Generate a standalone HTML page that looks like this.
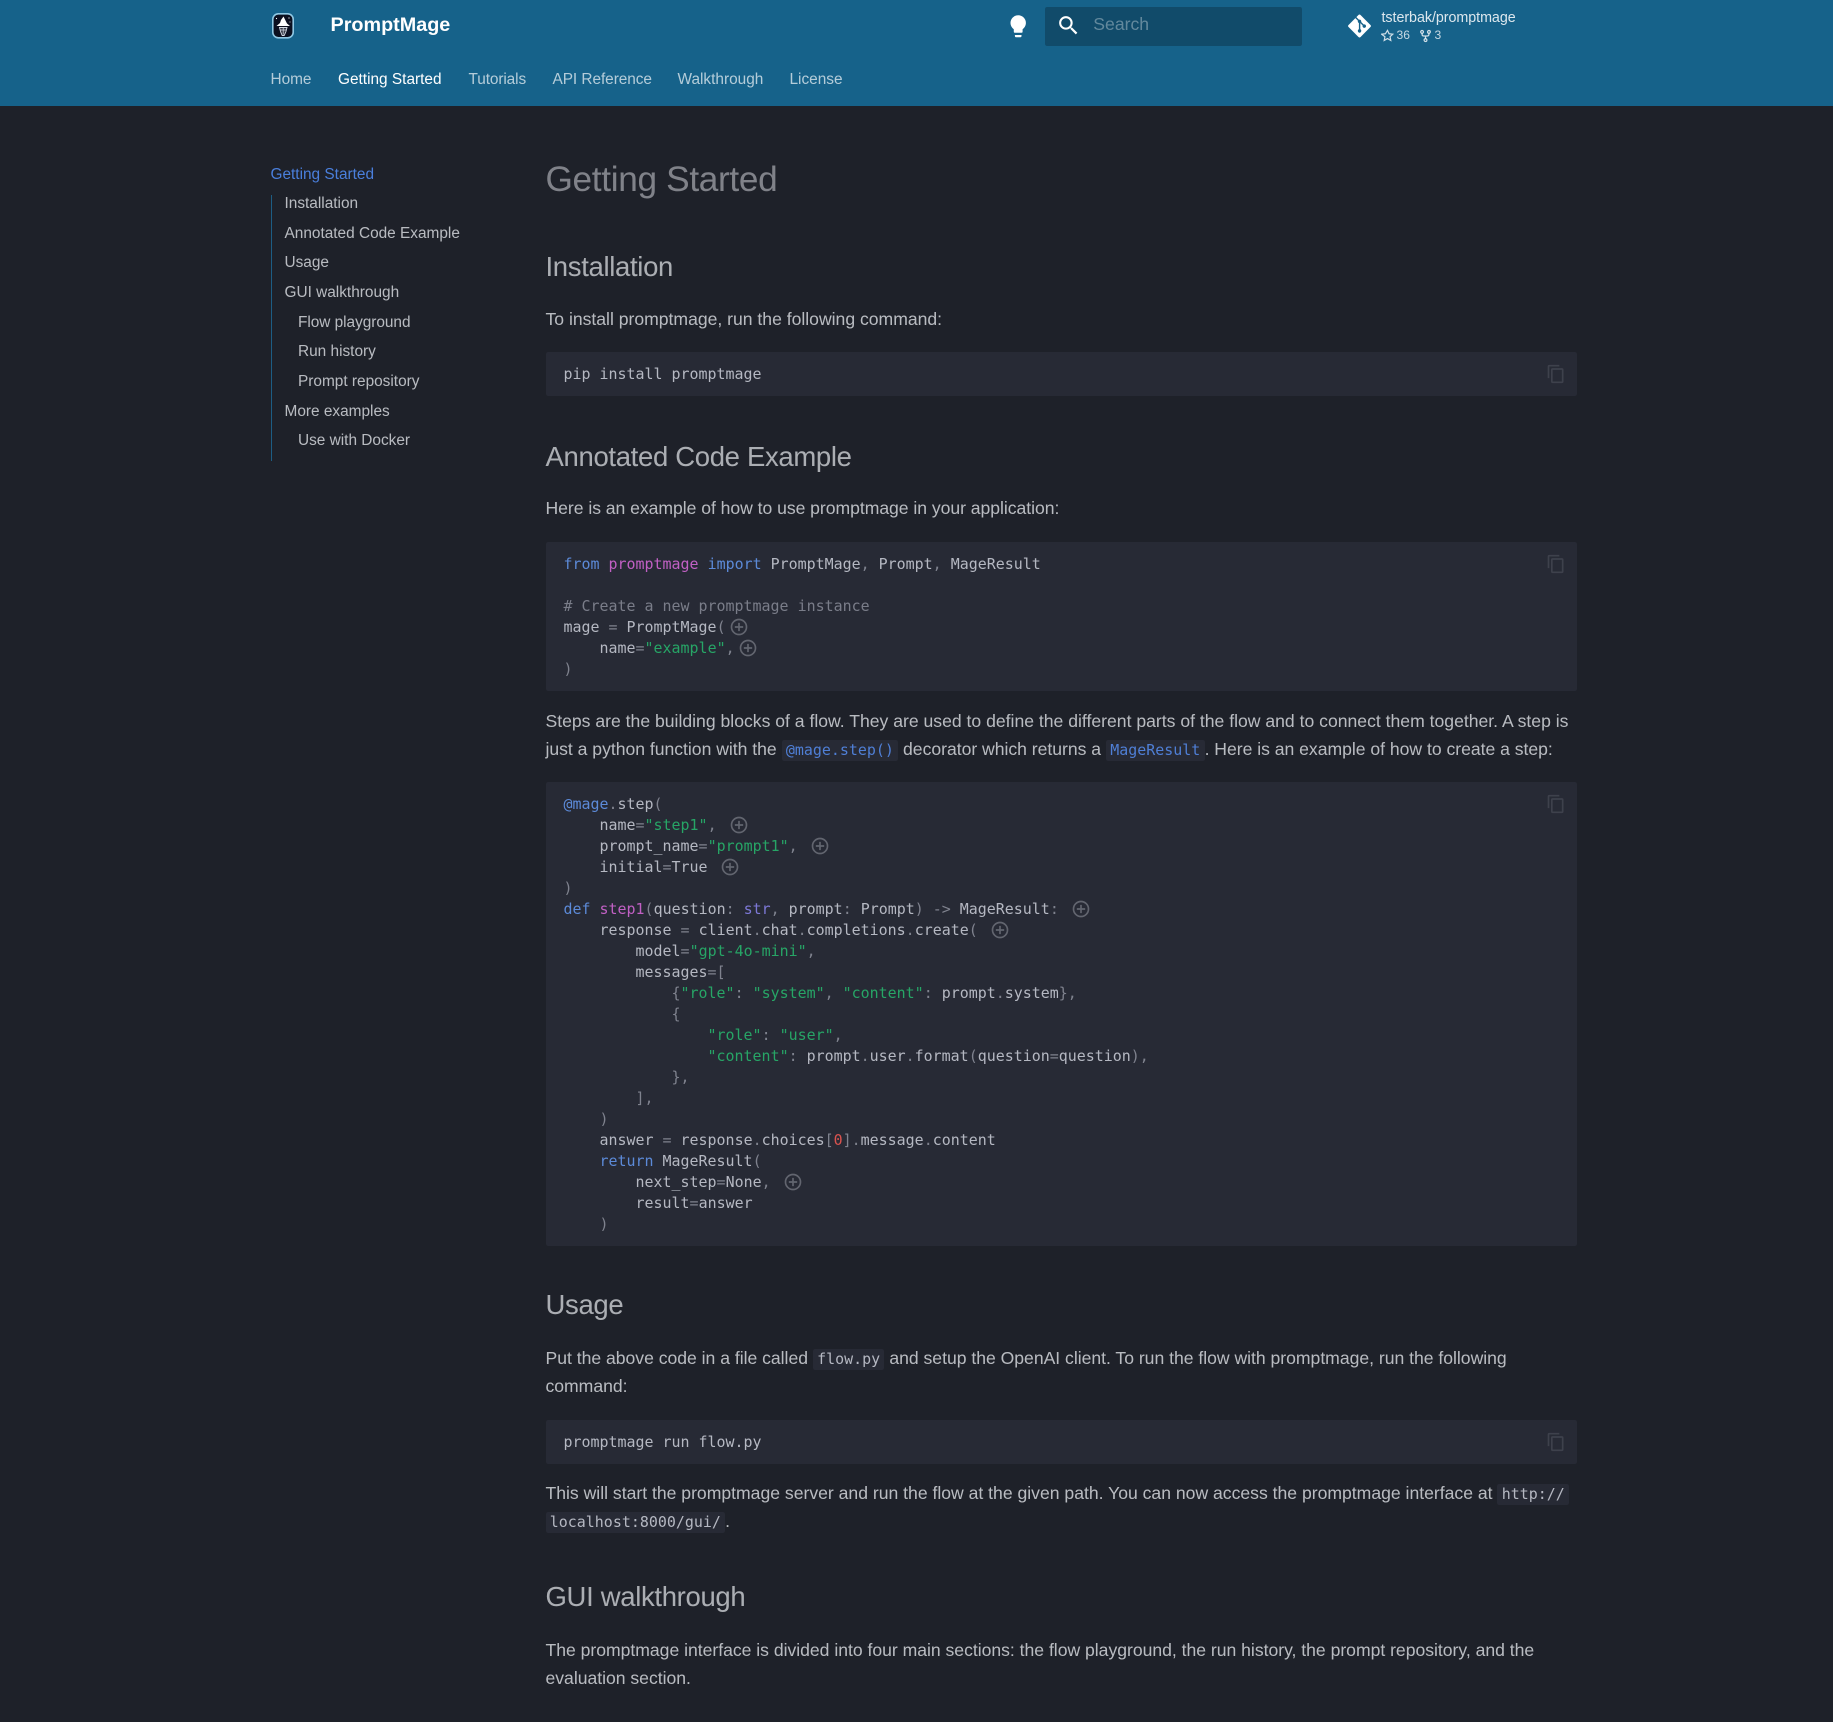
<!DOCTYPE html>
<html><head><meta charset="utf-8"><title>Getting Started - PromptMage</title>
<style>
*{box-sizing:border-box}
html,body{margin:0;padding:0;width:1833px;height:1722px;overflow:hidden;background:#1e2129}
body{position:relative;font-family:"Liberation Sans",Arial,sans-serif;color:rgba(226,228,233,.79);font-size:17.6px;line-height:28.16px}
.abs,h1,h2,p,pre,.nav a,.tab{position:absolute;margin:0}
#hdr{position:absolute;left:0;top:0;width:1833px;height:106px;background:#16628a}
.tab{top:68px;font-size:15.4px;line-height:23px;color:rgba(255,255,255,.68);white-space:nowrap;letter-spacing:-.03px}
.tab.on{color:#fff;letter-spacing:0}
h1{left:545.5px;top:157px;font-size:35.2px;line-height:45.76px;font-weight:400;color:rgba(226,228,233,.5);white-space:nowrap;letter-spacing:-.32px}
h2{left:545.5px;font-size:27.5px;line-height:38.5px;font-weight:400;color:rgba(226,228,233,.72);white-space:nowrap;letter-spacing:-.33px}
p{left:545.5px;width:1040px}
pre{left:546px;width:1031px;background:#272a35;border-radius:2.2px;padding:11.55px 17.5px;font-family:"DejaVu Sans Mono","Liberation Mono",monospace;font-size:14.96px;line-height:20.94px;color:#b5b8c2;white-space:pre;overflow:hidden}
pre.ml{padding-top:12.4px;line-height:20.98px}
p code{font-family:"DejaVu Sans Mono","Liberation Mono",monospace;font-size:14.96px;line-height:0;background:#272a35;border-radius:2.2px;padding:1px 4.3px 2px;color:#b5b8c2;letter-spacing:0}
p code.l{color:#4f7fd6}
.k{color:#5c8ad8}.m{color:#c160c4}.s{color:#27a566}.c{color:#7a7d89}.d{color:#7f828e}.b{color:#7d78d6}.n{color:#d9534f}
.a{position:absolute;width:20px;height:20px;margin-left:3.4px;margin-top:-.5px;fill:#62656f}
.copy{position:absolute;left:1000.2px;top:12px;width:20px;height:20px;fill:#3e414c}
.nav{position:absolute;font-size:15.4px;line-height:20px;white-space:nowrap;color:rgba(226,228,233,.79)}
</style></head>
<body>
<svg width="0" height="0" style="position:absolute"><defs>
<path id="pl" d="M13 7h-2v4H7v2h4v4h2v-4h4v-2h-4V7m-1-5A10 10 0 0 0 2 12a10 10 0 0 0 10 10 10 10 0 0 0 10-10A10 10 0 0 0 12 2m0 18a8 8 0 0 1-8-8 8 8 0 0 1 8-8 8 8 0 0 1 8 8 8 8 0 0 1-8 8Z"/>
<path id="cp" d="M19 21H8V7h11m0-2H8a2 2 0 0 0-2 2v14a2 2 0 0 0 2 2h11a2 2 0 0 0 2-2V7a2 2 0 0 0-2-2m-3-4H4a2 2 0 0 0-2 2v14h2V3h12V1Z"/>
</defs></svg>

<div id="hdr">
<svg class="abs" style="left:269px;top:12px" width="28" height="28" viewBox="0 0 28 28">
<rect x="3.800" y="1.800" width="20.400" height="24" rx="5.500" fill="#0c1020" stroke="#8fc8e4" stroke-width="1.600"/>
<path d="M14.500 4.500 12 8 11 11 7.500 14h13.500l-3-2.500-1.500-3L15.500 6.500Z" fill="#fff"/>
<path d="M10.500 15.500h7.500l-1 4-1.800 4h-2l-1.700-4Z" fill="#3a3d4a" stroke="#d5dae3" stroke-width=".9"/>
<path d="M11 18h6.500M14.200 15.500v7" fill="none" stroke="#d5dae3" stroke-width=".7"/>
<circle cx="7.500" cy="6.500" r=".6" fill="#fff"/><circle cx="20" cy="6" r=".6" fill="#fff"/><circle cx="21" cy="10" r=".5" fill="#fff"/>
</svg>
<div class="abs" style="left:330.5px;top:11px;font-size:19.8px;line-height:28px;font-weight:700;color:#fff;white-space:nowrap">PromptMage</div>
<svg class="abs" style="left:1005px;top:13px" width="26.4" height="26.4" viewBox="0 0 24 24" fill="#fff"><path d="M12 2a7 7 0 0 0-7 7c0 2.38 1.19 4.47 3 5.74V17a1 1 0 0 0 1 1h6a1 1 0 0 0 1-1v-2.26c1.81-1.27 3-3.36 3-5.74a7 7 0 0 0-7-7M9 21a1 1 0 0 0 1 1h4a1 1 0 0 0 1-1v-1H9v1Z"/></svg>
<div class="abs" style="left:1045px;top:7px;width:257px;height:39px;background:#114b6a;border-radius:2.2px"></div>
<svg class="abs" style="left:1056px;top:12.500px" width="25" height="25" viewBox="0 0 24 24" fill="#fff"><path d="M9.5 3A6.5 6.5 0 0 1 16 9.5c0 1.61-.59 3.09-1.56 4.23l.27.27h.79l5 5-1.5 1.5-5-5v-.79l-.27-.27A6.516 6.516 0 0 1 9.5 16 6.5 6.5 0 0 1 3 9.5 6.5 6.5 0 0 1 9.5 3m0 2C7 5 5 7 5 9.5S7 14 9.5 14 14 12 14 9.5 12 5 9.5 5Z"/></svg>
<div class="abs" style="left:1093.300px;top:10px;font-size:17.6px;line-height:28px;color:rgba(255,255,255,.34)">Search</div>
<svg class="abs" style="left:1348px;top:13px" width="23" height="26" viewBox="0 0 448 512" fill="#fff"><path d="M439.55 236.05 244 40.45a28.87 28.87 0 0 0-40.81 0l-40.66 40.63 51.52 51.52c27.06-9.14 52.68 16.77 43.39 43.68l49.66 49.66c34.23-11.8 61.18 31 35.47 56.69-26.49 26.49-70.21-2.87-56-37.34L240.22 199v121.85c25.3 12.54 22.26 41.85 9.08 55a34.34 34.34 0 0 1-48.55 0c-17.57-17.6-11.07-46.91 11.25-56v-123c-20.8-8.51-24.6-30.74-18.64-45L142.57 101 8.45 235.14a28.86 28.86 0 0 0 0 40.81l195.61 195.6a28.86 28.86 0 0 0 40.8 0l194.69-194.69a28.86 28.86 0 0 0 0-40.81z"/></svg>
<div class="abs" style="left:1381.5px;top:8px;font-size:14.3px;line-height:20px;color:rgba(255,255,255,.85);white-space:nowrap;letter-spacing:-.05px">tsterbak/promptmage</div>
<svg class="abs" style="left:1381px;top:29px" width="13" height="13" viewBox="0 0 24 24" fill="none" stroke="rgba(255,255,255,.8)" stroke-width="2.2"><path d="M12 2.5l2.9 6.3 6.9.8-5.1 4.7 1.4 6.8-6.1-3.4-6.1 3.4 1.4-6.8L1.2 9.6l6.9-.8Z"/></svg>
<div class="abs" style="left:1396.5px;top:27px;font-size:12.1px;line-height:16px;color:rgba(255,255,255,.75)">36</div>
<svg class="abs" style="left:1420px;top:29px" width="11" height="14" viewBox="0 0 16 18" fill="none" stroke="rgba(255,255,255,.8)" stroke-width="1.8"><circle cx="3" cy="3" r="2"/><circle cx="13" cy="3" r="2"/><circle cx="8" cy="15" r="2"/><path d="M3 5v1.5c0 1.5 1 2.5 2.5 2.5h5C12 9 13 8 13 6.500V5M8 9v4"/></svg>
<div class="abs" style="left:1434.5px;top:27px;font-size:12.1px;line-height:16px;color:rgba(255,255,255,.75)">3</div>
<span class="tab" style="left:270.500px">Home</span>
<span class="tab on" style="left:338px">Getting Started</span>
<span class="tab" style="left:468.500px;letter-spacing:-.1px">Tutorials</span>
<span class="tab" style="left:552.500px;letter-spacing:-.05px">API Reference</span>
<span class="tab" style="left:677.500px;letter-spacing:0">Walkthrough</span>
<span class="tab" style="left:789.500px;letter-spacing:0">License</span>
</div>

<div class="abs" style="left:271px;top:195px;width:1.1px;height:266px;background:#1d5d83"></div>
<div class="nav" style="left:270.500px;top:164.500px;color:#4a7fdc">Getting Started</div>
<div class="nav" style="left:284.500px;top:194px">Installation</div>
<div class="nav" style="left:284.500px;top:223.500px">Annotated Code Example</div>
<div class="nav" style="left:284.500px;top:253px">Usage</div>
<div class="nav" style="left:284.500px;top:283px">GUI walkthrough</div>
<div class="nav" style="left:298px;top:312.500px;letter-spacing:-.03px">Flow playground</div>
<div class="nav" style="left:298px;top:342px">Run history</div>
<div class="nav" style="left:298px;top:372px">Prompt repository</div>
<div class="nav" style="left:284.500px;top:401.500px">More examples</div>
<div class="nav" style="left:298px;top:431px">Use with Docker</div>

<h1>Getting Started</h1>
<h2 style="top:248px">Installation</h2>
<p style="top:305px;letter-spacing:-.01px">To install promptmage, run the following command:</p>
<pre style="top:352px;height:44px">pip install promptmage<svg class="copy" viewBox="0 0 24 24"><use href="#cp"/></svg></pre>

<h2 style="top:437.500px">Annotated Code Example</h2>
<p style="top:494px;letter-spacing:-.04px">Here is an example of how to use promptmage in your application:</p>
<pre class="ml" style="top:542px;height:149px"><span class="k">from</span> <span class="m">promptmage</span> <span class="k">import</span> PromptMage<span class="d">,</span> Prompt<span class="d">,</span> MageResult

<span class="c"># Create a new promptmage instance</span>
mage <span class="d">=</span> PromptMage<span class="d">(</span><svg class="a" viewBox="0 0 24 24"><use href="#pl"/></svg>
    name<span class="d">=</span><span class="s">"example"</span><span class="d">,</span><svg class="a" viewBox="0 0 24 24"><use href="#pl"/></svg>
<span class="d">)</span><svg class="copy" viewBox="0 0 24 24"><use href="#cp"/></svg></pre>

<p style="top:706.500px"><span style="letter-spacing:-.003px">Steps are the building blocks of a flow. They are used to define the different parts of the flow and to connect them together. A step is</span><br><span style="letter-spacing:-.02px">just a python function with the <code class="l">@mage.step()</code> decorator which returns a <code class="l">MageResult</code>. Here is an example of how to create a step:</span></p>

<pre class="ml" style="top:782px;height:464px"><span class="k">@mage</span><span class="d">.</span>step<span class="d">(</span>
    name<span class="d">=</span><span class="s">"step1"</span><span class="d">,</span> <svg class="a" viewBox="0 0 24 24"><use href="#pl"/></svg>
    prompt_name<span class="d">=</span><span class="s">"prompt1"</span><span class="d">,</span> <svg class="a" viewBox="0 0 24 24"><use href="#pl"/></svg>
    initial<span class="d">=</span>True <svg class="a" viewBox="0 0 24 24"><use href="#pl"/></svg>
<span class="d">)</span>
<span class="k">def</span> <span class="m">step1</span><span class="d">(</span>question<span class="d">:</span> <span class="b">str</span><span class="d">,</span> prompt<span class="d">:</span> Prompt<span class="d">)</span> <span class="d">-&gt;</span> MageResult<span class="d">:</span> <svg class="a" viewBox="0 0 24 24"><use href="#pl"/></svg>
    response <span class="d">=</span> client<span class="d">.</span>chat<span class="d">.</span>completions<span class="d">.</span>create<span class="d">(</span> <svg class="a" viewBox="0 0 24 24"><use href="#pl"/></svg>
        model<span class="d">=</span><span class="s">"gpt-4o-mini"</span><span class="d">,</span>
        messages<span class="d">=[</span>
            <span class="d">{</span><span class="s">"role"</span><span class="d">:</span> <span class="s">"system"</span><span class="d">,</span> <span class="s">"content"</span><span class="d">:</span> prompt<span class="d">.</span>system<span class="d">},</span>
            <span class="d">{</span>
                <span class="s">"role"</span><span class="d">:</span> <span class="s">"user"</span><span class="d">,</span>
                <span class="s">"content"</span><span class="d">:</span> prompt<span class="d">.</span>user<span class="d">.</span>format<span class="d">(</span>question<span class="d">=</span>question<span class="d">),</span>
            <span class="d">},</span>
        <span class="d">],</span>
    <span class="d">)</span>
    answer <span class="d">=</span> response<span class="d">.</span>choices<span class="d">[</span><span class="n">0</span><span class="d">].</span>message<span class="d">.</span>content
    <span class="k">return</span> MageResult<span class="d">(</span>
        next_step<span class="d">=</span>None<span class="d">,</span> <svg class="a" viewBox="0 0 24 24"><use href="#pl"/></svg>
        result<span class="d">=</span>answer
    <span class="d">)</span><svg class="copy" viewBox="0 0 24 24"><use href="#cp"/></svg></pre>

<h2 style="top:1286px">Usage</h2>
<p style="top:1343.500px;letter-spacing:-.018px">Put the above code in a file called <code>flow.py</code> and setup the OpenAI client. To run the flow with promptmage, run the following<br>command:</p>
<pre style="top:1420px;height:44px">promptmage run flow.py<svg class="copy" viewBox="0 0 24 24"><use href="#cp"/></svg></pre>
<p style="top:1479px;letter-spacing:-.005px">This will start the promptmage server and run the flow at the given path. You can now access the promptmage interface at <code>http://</code><br><code>localhost:8000/gui/</code>.</p>

<h2 style="top:1578px">GUI walkthrough</h2>
<p style="top:1635.500px;letter-spacing:-.018px">The promptmage interface is divided into four main sections: the flow playground, the run history, the prompt repository, and the<br>evaluation section.</p>
</body></html>
